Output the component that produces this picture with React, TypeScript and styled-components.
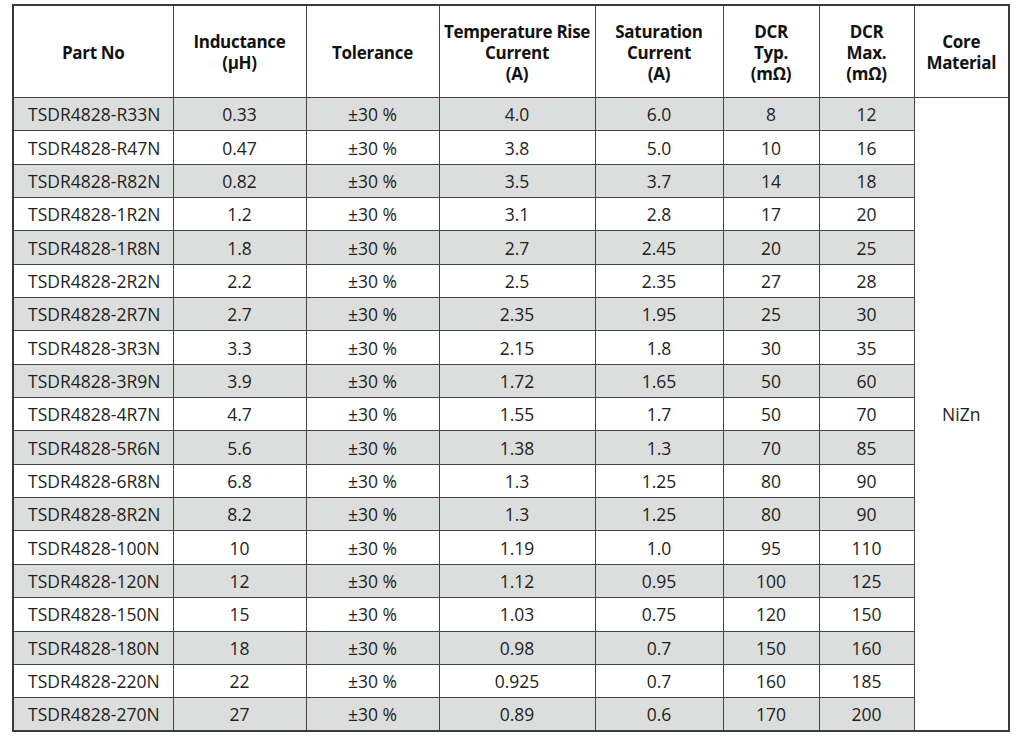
import React from "react";
import styled, { createGlobalStyle } from "styled-components";

const Global = createGlobalStyle`
  html, body { margin: 0; padding: 0; background: #ffffff; }
  body { font-family: "Open Sans", "Noto Sans", sans-serif; }
`;

const Page = styled.div`
  padding: 4px 0 0 12px;
`;

const Table = styled.table`
  border-collapse: collapse;
  table-layout: fixed;
  width: 996px;
  border: 2px solid #3f3836;
  color: #231f20;
`;

const HeadCell = styled.th`
  border: 1.5px solid #4a4341;
  font-weight: 700;
  font-size: 17px;
  line-height: 21px;
  color: #111;
  text-align: center;
  vertical-align: middle;
  padding: 1px 0 0;
  height: 90px;
  letter-spacing: -0.3px;
  white-space: nowrap;
`;

const Row = styled.tr<{ $shaded: boolean }>`
  background: ${(p) => (p.$shaded ? "#dcdddd" : "#ffffff")};
  height: 33.35px;
`;

const Cell = styled.td`
  border: 1.5px solid #4a4341;
  font-size: 17.5px;
  text-align: center;
  padding: 0;
  vertical-align: middle;
  white-space: nowrap;
  letter-spacing: 0;
`;

const PartCell = styled(Cell)`
  text-align: left;
  padding: 0 0 0 14px;
`;

const CoreCell = styled.td`
  border: 1.5px solid #4a4341;
  background: #ffffff;
  text-align: center;
  vertical-align: middle;
  font-size: 17.5px;
  padding: 0;
`;

const rows: [string, string, string, string, string, string][] = [
  ["R33N", "0.33", "4.0", "6.0", "8", "12"],
  ["R47N", "0.47", "3.8", "5.0", "10", "16"],
  ["R82N", "0.82", "3.5", "3.7", "14", "18"],
  ["1R2N", "1.2", "3.1", "2.8", "17", "20"],
  ["1R8N", "1.8", "2.7", "2.45", "20", "25"],
  ["2R2N", "2.2", "2.5", "2.35", "27", "28"],
  ["2R7N", "2.7", "2.35", "1.95", "25", "30"],
  ["3R3N", "3.3", "2.15", "1.8", "30", "35"],
  ["3R9N", "3.9", "1.72", "1.65", "50", "60"],
  ["4R7N", "4.7", "1.55", "1.7", "50", "70"],
  ["5R6N", "5.6", "1.38", "1.3", "70", "85"],
  ["6R8N", "6.8", "1.3", "1.25", "80", "90"],
  ["8R2N", "8.2", "1.3", "1.25", "80", "90"],
  ["100N", "10", "1.19", "1.0", "95", "110"],
  ["120N", "12", "1.12", "0.95", "100", "125"],
  ["150N", "15", "1.03", "0.75", "120", "150"],
  ["180N", "18", "0.98", "0.7", "150", "160"],
  ["220N", "22", "0.925", "0.7", "160", "185"],
  ["270N", "27", "0.89", "0.6", "170", "200"],
];

const widths = [160, 133, 133, 156, 128, 96, 95, 95];

export default function App() {
  return (
    <Page>
      <Global />
      <Table>
        <colgroup>
          {widths.map((w, i) => (
            <col key={i} style={{ width: w }} />
          ))}
        </colgroup>
        <thead>
          <tr>
            <HeadCell>Part No</HeadCell>
            <HeadCell>
              Inductance
              <br />
              (µH)
            </HeadCell>
            <HeadCell>Tolerance</HeadCell>
            <HeadCell>
              Temperature Rise
              <br />
              Current
              <br />
              (A)
            </HeadCell>
            <HeadCell>
              Saturation
              <br />
              Current
              <br />
              (A)
            </HeadCell>
            <HeadCell>
              DCR
              <br />
              Typ.
              <br />
              (mΩ)
            </HeadCell>
            <HeadCell>
              DCR
              <br />
              Max.
              <br />
              (mΩ)
            </HeadCell>
            <HeadCell>
              Core
              <br />
              Material
            </HeadCell>
          </tr>
        </thead>
        <tbody>
          {rows.map((r, i) => (
            <Row key={r[0]} $shaded={i % 2 === 0}>
              <PartCell>TSDR4828-{r[0]}</PartCell>
              <Cell>{r[1]}</Cell>
              <Cell>±30 %</Cell>
              <Cell>{r[2]}</Cell>
              <Cell>{r[3]}</Cell>
              <Cell>{r[4]}</Cell>
              <Cell>{r[5]}</Cell>
              {i === 0 && <CoreCell rowSpan={rows.length}>NiZn</CoreCell>}
            </Row>
          ))}
        </tbody>
      </Table>
    </Page>
  );
}
